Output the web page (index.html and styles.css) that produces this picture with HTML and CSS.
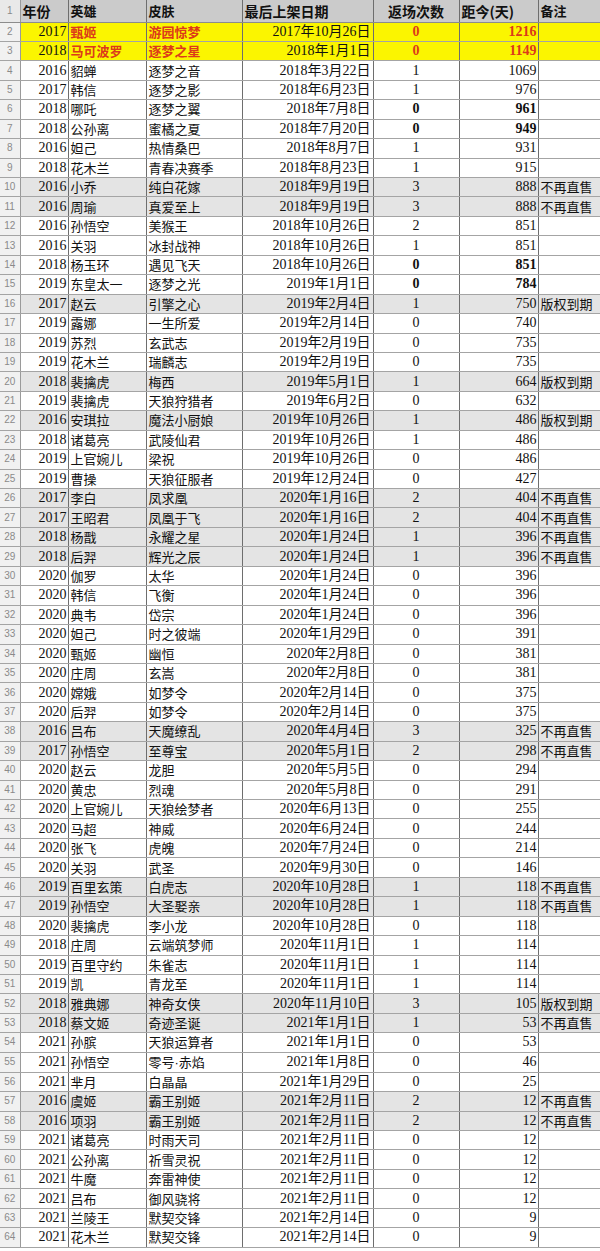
FILE: index.html
```html
<!DOCTYPE html>
<html lang="zh-CN">
<head>
<meta charset="utf-8">
<title>皮肤返场统计</title>
<link rel="stylesheet" href="styles.css">
</head>
<body>
<table class="sheet">
<colgroup>
<col class="w-n"><col class="w-y"><col class="w-h"><col class="w-s"><col class="w-d"><col class="w-c"><col class="w-v"><col class="w-m">
</colgroup>
<thead>
<tr class="head"><td>1</td><td>年份</td><td>英雄</td><td>皮肤</td><td>最后上架日期</td><td>返场次数</td><td>距今(天)</td><td>备注</td></tr>
</thead>
<tbody>
<tr class="hl"><td>2</td><td>2017</td><td>甄姬</td><td>游园惊梦</td><td>2017年10月26日</td><td>0</td><td>1216</td><td></td></tr>
<tr class="hl"><td>3</td><td>2018</td><td>马可波罗</td><td>逐梦之星</td><td>2018年1月1日</td><td>0</td><td>1149</td><td></td></tr>
<tr><td>4</td><td>2016</td><td>貂蝉</td><td>逐梦之音</td><td>2018年3月22日</td><td>1</td><td>1069</td><td></td></tr>
<tr><td>5</td><td>2017</td><td>韩信</td><td>逐梦之影</td><td>2018年6月23日</td><td>1</td><td>976</td><td></td></tr>
<tr class="b"><td>6</td><td>2018</td><td>哪吒</td><td>逐梦之翼</td><td>2018年7月8日</td><td>0</td><td>961</td><td></td></tr>
<tr class="b"><td>7</td><td>2018</td><td>公孙离</td><td>蜜橘之夏</td><td>2018年7月20日</td><td>0</td><td>949</td><td></td></tr>
<tr><td>8</td><td>2016</td><td>妲己</td><td>热情桑巴</td><td>2018年8月7日</td><td>1</td><td>931</td><td></td></tr>
<tr><td>9</td><td>2018</td><td>花木兰</td><td>青春决赛季</td><td>2018年8月23日</td><td>1</td><td>915</td><td></td></tr>
<tr class="g"><td>10</td><td>2016</td><td>小乔</td><td>纯白花嫁</td><td>2018年9月19日</td><td>3</td><td>888</td><td>不再直售</td></tr>
<tr class="g"><td>11</td><td>2016</td><td>周瑜</td><td>真爱至上</td><td>2018年9月19日</td><td>3</td><td>888</td><td>不再直售</td></tr>
<tr><td>12</td><td>2016</td><td>孙悟空</td><td>美猴王</td><td>2018年10月26日</td><td>2</td><td>851</td><td></td></tr>
<tr><td>13</td><td>2016</td><td>关羽</td><td>冰封战神</td><td>2018年10月26日</td><td>1</td><td>851</td><td></td></tr>
<tr class="b"><td>14</td><td>2018</td><td>杨玉环</td><td>遇见飞天</td><td>2018年10月26日</td><td>0</td><td>851</td><td></td></tr>
<tr class="b"><td>15</td><td>2019</td><td>东皇太一</td><td>逐梦之光</td><td>2019年1月1日</td><td>0</td><td>784</td><td></td></tr>
<tr class="g"><td>16</td><td>2017</td><td>赵云</td><td>引擎之心</td><td>2019年2月4日</td><td>1</td><td>750</td><td>版权到期</td></tr>
<tr><td>17</td><td>2019</td><td>露娜</td><td>一生所爱</td><td>2019年2月14日</td><td>0</td><td>740</td><td></td></tr>
<tr><td>18</td><td>2019</td><td>苏烈</td><td>玄武志</td><td>2019年2月19日</td><td>0</td><td>735</td><td></td></tr>
<tr><td>19</td><td>2019</td><td>花木兰</td><td>瑞麟志</td><td>2019年2月19日</td><td>0</td><td>735</td><td></td></tr>
<tr class="g"><td>20</td><td>2018</td><td>裴擒虎</td><td>梅西</td><td>2019年5月1日</td><td>1</td><td>664</td><td>版权到期</td></tr>
<tr><td>21</td><td>2019</td><td>裴擒虎</td><td>天狼狩猎者</td><td>2019年6月2日</td><td>0</td><td>632</td><td></td></tr>
<tr class="g"><td>22</td><td>2016</td><td>安琪拉</td><td>魔法小厨娘</td><td>2019年10月26日</td><td>1</td><td>486</td><td>版权到期</td></tr>
<tr><td>23</td><td>2018</td><td>诸葛亮</td><td>武陵仙君</td><td>2019年10月26日</td><td>1</td><td>486</td><td></td></tr>
<tr><td>24</td><td>2019</td><td>上官婉儿</td><td>梁祝</td><td>2019年10月26日</td><td>0</td><td>486</td><td></td></tr>
<tr><td>25</td><td>2019</td><td>曹操</td><td>天狼征服者</td><td>2019年12月24日</td><td>0</td><td>427</td><td></td></tr>
<tr class="g"><td>26</td><td>2017</td><td>李白</td><td>凤求凰</td><td>2020年1月16日</td><td>2</td><td>404</td><td>不再直售</td></tr>
<tr class="g"><td>27</td><td>2017</td><td>王昭君</td><td>凤凰于飞</td><td>2020年1月16日</td><td>2</td><td>404</td><td>不再直售</td></tr>
<tr class="g"><td>28</td><td>2018</td><td>杨戬</td><td>永耀之星</td><td>2020年1月24日</td><td>1</td><td>396</td><td>不再直售</td></tr>
<tr class="g"><td>29</td><td>2018</td><td>后羿</td><td>辉光之辰</td><td>2020年1月24日</td><td>1</td><td>396</td><td>不再直售</td></tr>
<tr><td>30</td><td>2020</td><td>伽罗</td><td>太华</td><td>2020年1月24日</td><td>0</td><td>396</td><td></td></tr>
<tr><td>31</td><td>2020</td><td>韩信</td><td>飞衡</td><td>2020年1月24日</td><td>0</td><td>396</td><td></td></tr>
<tr><td>32</td><td>2020</td><td>典韦</td><td>岱宗</td><td>2020年1月24日</td><td>0</td><td>396</td><td></td></tr>
<tr><td>33</td><td>2020</td><td>妲己</td><td>时之彼端</td><td>2020年1月29日</td><td>0</td><td>391</td><td></td></tr>
<tr><td>34</td><td>2020</td><td>甄姬</td><td>幽恒</td><td>2020年2月8日</td><td>0</td><td>381</td><td></td></tr>
<tr><td>35</td><td>2020</td><td>庄周</td><td>玄嵩</td><td>2020年2月8日</td><td>0</td><td>381</td><td></td></tr>
<tr><td>36</td><td>2020</td><td>嫦娥</td><td>如梦令</td><td>2020年2月14日</td><td>0</td><td>375</td><td></td></tr>
<tr><td>37</td><td>2020</td><td>后羿</td><td>如梦令</td><td>2020年2月14日</td><td>0</td><td>375</td><td></td></tr>
<tr class="g"><td>38</td><td>2016</td><td>吕布</td><td>天魔缭乱</td><td>2020年4月4日</td><td>3</td><td>325</td><td>不再直售</td></tr>
<tr class="g"><td>39</td><td>2017</td><td>孙悟空</td><td>至尊宝</td><td>2020年5月1日</td><td>2</td><td>298</td><td>不再直售</td></tr>
<tr><td>40</td><td>2020</td><td>赵云</td><td>龙胆</td><td>2020年5月5日</td><td>0</td><td>294</td><td></td></tr>
<tr><td>41</td><td>2020</td><td>黄忠</td><td>烈魂</td><td>2020年5月8日</td><td>0</td><td>291</td><td></td></tr>
<tr><td>42</td><td>2020</td><td>上官婉儿</td><td>天狼绘梦者</td><td>2020年6月13日</td><td>0</td><td>255</td><td></td></tr>
<tr><td>43</td><td>2020</td><td>马超</td><td>神威</td><td>2020年6月24日</td><td>0</td><td>244</td><td></td></tr>
<tr><td>44</td><td>2020</td><td>张飞</td><td>虎魄</td><td>2020年7月24日</td><td>0</td><td>214</td><td></td></tr>
<tr><td>45</td><td>2020</td><td>关羽</td><td>武圣</td><td>2020年9月30日</td><td>0</td><td>146</td><td></td></tr>
<tr class="g"><td>46</td><td>2019</td><td>百里玄策</td><td>白虎志</td><td>2020年10月28日</td><td>1</td><td>118</td><td>不再直售</td></tr>
<tr class="g"><td>47</td><td>2019</td><td>孙悟空</td><td>大圣娶亲</td><td>2020年10月28日</td><td>1</td><td>118</td><td>不再直售</td></tr>
<tr><td>48</td><td>2020</td><td>裴擒虎</td><td>李小龙</td><td>2020年10月28日</td><td>0</td><td>118</td><td></td></tr>
<tr><td>49</td><td>2018</td><td>庄周</td><td>云端筑梦师</td><td>2020年11月1日</td><td>1</td><td>114</td><td></td></tr>
<tr><td>50</td><td>2019</td><td>百里守约</td><td>朱雀志</td><td>2020年11月1日</td><td>1</td><td>114</td><td></td></tr>
<tr><td>51</td><td>2019</td><td>凯</td><td>青龙至</td><td>2020年11月1日</td><td>1</td><td>114</td><td></td></tr>
<tr class="g"><td>52</td><td>2018</td><td>雅典娜</td><td>神奇女侠</td><td>2020年11月10日</td><td>3</td><td>105</td><td>版权到期</td></tr>
<tr class="g"><td>53</td><td>2018</td><td>蔡文姬</td><td>奇迹圣诞</td><td>2021年1月1日</td><td>1</td><td>53</td><td>不再直售</td></tr>
<tr><td>54</td><td>2021</td><td>孙膑</td><td>天狼运算者</td><td>2021年1月1日</td><td>0</td><td>53</td><td></td></tr>
<tr><td>55</td><td>2021</td><td>孙悟空</td><td>零号<span class="dot">·</span>赤焰</td><td>2021年1月8日</td><td>0</td><td>46</td><td></td></tr>
<tr><td>56</td><td>2021</td><td>芈月</td><td>白晶晶</td><td>2021年1月29日</td><td>0</td><td>25</td><td></td></tr>
<tr class="g"><td>57</td><td>2016</td><td>虞姬</td><td>霸王别姬</td><td>2021年2月11日</td><td>2</td><td>12</td><td>不再直售</td></tr>
<tr class="g"><td>58</td><td>2016</td><td>项羽</td><td>霸王别姬</td><td>2021年2月11日</td><td>2</td><td>12</td><td>不再直售</td></tr>
<tr><td>59</td><td>2021</td><td>诸葛亮</td><td>时雨天司</td><td>2021年2月11日</td><td>0</td><td>12</td><td></td></tr>
<tr><td>60</td><td>2021</td><td>公孙离</td><td>祈雪灵祝</td><td>2021年2月11日</td><td>0</td><td>12</td><td></td></tr>
<tr><td>61</td><td>2021</td><td>牛魔</td><td>奔雷神使</td><td>2021年2月11日</td><td>0</td><td>12</td><td></td></tr>
<tr><td>62</td><td>2021</td><td>吕布</td><td>御风骁将</td><td>2021年2月11日</td><td>0</td><td>12</td><td></td></tr>
<tr><td>63</td><td>2021</td><td>兰陵王</td><td>默契交锋</td><td>2021年2月14日</td><td>0</td><td>9</td><td></td></tr>
<tr><td>64</td><td>2021</td><td>花木兰</td><td>默契交锋</td><td>2021年2月14日</td><td>0</td><td>9</td><td></td></tr>
</tbody>
</table>
</body>
</html>
```

FILE: styles.css
```css
html, body {
  margin: 0;
  padding: 0;
  background: #ffffff;
}

body {
  width: 600px;
  font-family: "Liberation Serif", "Noto Sans CJK SC", serif;
  color: #111111;
}

.sheet {
  width: 600px;
  table-layout: fixed;
  border-collapse: collapse;
  border-spacing: 0;
}

.w-n { width: 20px; }
.w-y { width: 48px; }
.w-h { width: 78px; }
.w-s { width: 96px; }
.w-d { width: 131px; }
.w-c { width: 86px; }
.w-v { width: 79px; }
.w-m { width: 62px; }

.sheet td {
  height: 19.45px;
  padding: 0 2px;
  box-sizing: border-box;
  border-right: 1px solid #6e6e6e;
  border-bottom: 1px solid #a4a4a4;
  white-space: nowrap;
  overflow: hidden;
  font-size: 14px;
  line-height: 18px;
  vertical-align: middle;
}

.sheet td:nth-child(1) {
  padding: 0;
  background: #f1f1f1;
  color: #8a8a8a;
  font-family: "Liberation Sans", sans-serif;
  font-size: 10px;
  text-align: center;
  border-right-color: #9a9a9a;
}

.sheet td:nth-child(2) { text-align: right; padding-right: 1px; }
.sheet td:nth-child(3),
.sheet td:nth-child(4),
.sheet td:nth-child(8) {
  font-family: "Noto Sans CJK SC", sans-serif;
  font-size: 13px;
  text-align: left;
}
.sheet td:nth-child(5) { text-align: right; }
.sheet td:nth-child(6) { text-align: center; }
.sheet td:nth-child(7) { text-align: right; padding-right: 1px; }

.dot {
  font-family: "Liberation Sans", sans-serif;
}

.head td {
  height: 22px;
  background: #cbcbcb;
  font-family: "Noto Sans CJK SC", sans-serif;
  font-weight: 700;
  font-size: 14px;
  color: #111111;
  text-align: left;
  border-bottom: 1px solid #8c8c8c;
}
.head td:nth-child(1) { background: #e9e9e9; font-weight: 400; }
.head td:nth-child(2) { text-align: left; }
.head td:nth-child(5) { text-align: left; }
.head td:nth-child(6) { text-align: center; }
.head td:nth-child(7) { text-align: left; }

.g td { background: #e4e4e4; }
.g td:nth-child(1) { background: #f1f1f1; }

.hl td { background: #fbf500; }
.hl td:nth-child(1) { background: #f1f1f1; }
.hl td:nth-child(3),
.hl td:nth-child(4),
.hl td:nth-child(6),
.hl td:nth-child(7) {
  color: #dc3a1a;
  font-weight: 700;
}

.b td:nth-child(6),
.b td:nth-child(7) {
  font-weight: 700;
}
```
